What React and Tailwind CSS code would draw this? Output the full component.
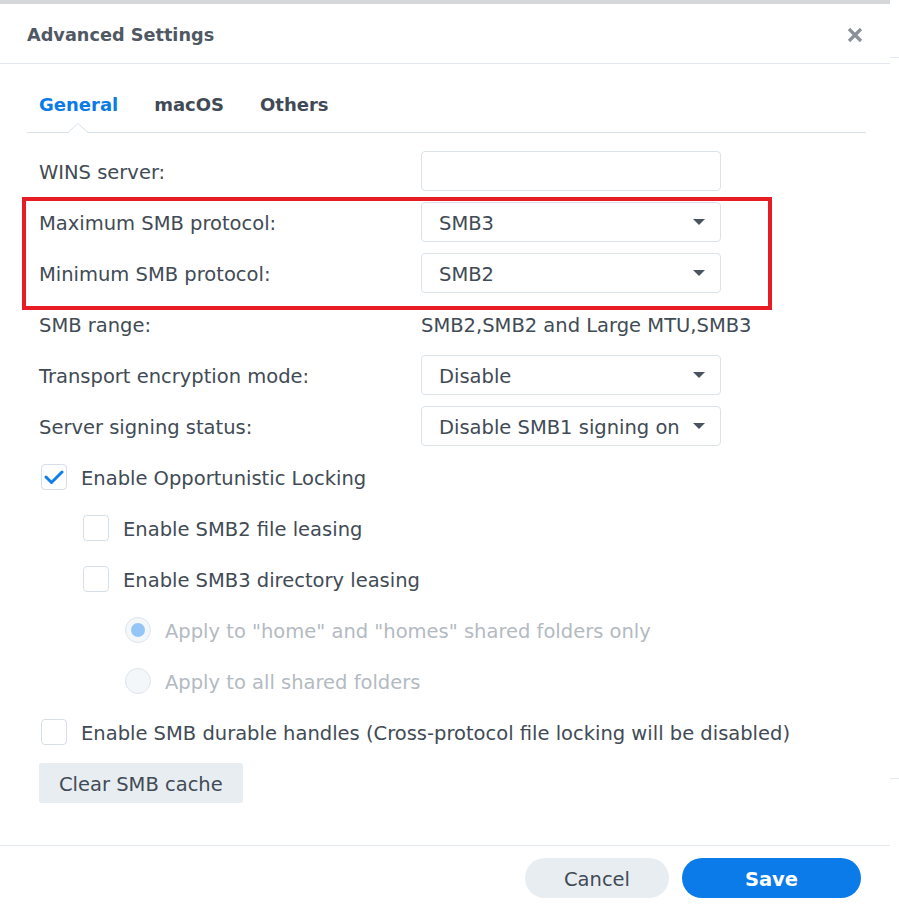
import React from "react";

function Select({ value }) {
  return (
    <div className="h-[40px] w-[300px] border border-[#dbe2ea] rounded-[4px] bg-white flex items-center justify-between pl-[17px] pr-[15px]">
      <span className="whitespace-nowrap pt-[3px]">{value}</span>
      <svg width="12" height="6" viewBox="0 0 12 6" className="shrink-0">
        <polygon points="0,0 12,0 6,6" fill="#4a5360" />
      </svg>
    </div>
  );
}

function Checkbox({ checked }) {
  return (
    <div className="w-[26px] h-[26px] rounded-[4px] border border-[#d6dee8] bg-white flex items-center justify-center shrink-0">
      {checked && (
        <svg width="20" height="16" viewBox="0 0 20 16">
          <polyline points="2,8 7.5,13.5 18,3" fill="none" stroke="#0f7fe8" strokeWidth="3" strokeLinecap="round" strokeLinejoin="round" />
        </svg>
      )}
    </div>
  );
}

function Radio({ checked }) {
  return (
    <div className="w-[26px] h-[26px] rounded-full border border-[#dde5ee] bg-[#f4f7fa] flex items-center justify-center shrink-0">
      {checked && <div className="w-[14px] h-[14px] rounded-full bg-[#93c6f6]" />}
    </div>
  );
}

function Row({ label, children }) {
  return (
    <div className="h-[40px] flex items-center">
      <div className="w-[382px] whitespace-nowrap pt-[3px]">{label}</div>
      {children}
    </div>
  );
}

export default function App() {
  return (
    <div className="w-[899px] h-[914px] bg-white overflow-hidden relative font-['DejaVu_Sans',sans-serif] text-[19.5px] text-[#414b55]">
      <div className="h-[4px] w-[890px] bg-[#d5d7d9]" />
      <div className="w-[890px] h-[910px] flex flex-col">
        {/* header */}
        <div className="h-[60px] shrink-0 flex items-center justify-between pl-[27px] pr-[27px] border-b border-[#e3e8ee]">
          <div className="text-[17.7px] font-bold text-[#4f5863] pt-[3px]">Advanced Settings</div>
          <svg width="16" height="16" viewBox="0 0 16 16" className="mt-[2px]">
            <line x1="2" y1="2" x2="14" y2="14" stroke="#8b9198" strokeWidth="3.2" />
            <line x1="14" y1="2" x2="2" y2="14" stroke="#8b9198" strokeWidth="3.2" />
          </svg>
        </div>

        {/* body */}
        <div className="flex-1 pl-[27px] pr-[24px]">
          {/* tabs */}
          <div className="relative border-b border-[#d8e2ec] pt-[29px] pb-[15px] pl-[12px] flex gap-[36px] text-[18px] font-bold leading-[24px]">
            <span className="text-[#0b7be6]">General</span>
            <span className="text-[#3f4a56]">macOS</span>
            <span className="text-[#3f4a56]">Others</span>
            <svg width="20" height="10" viewBox="0 0 20 10" className="absolute left-[41px] bottom-[-1px]">
              <polygon points="0,10 10,1 20,10" fill="#ffffff" />
              <polyline points="0,9.5 10,0.5 20,9.5" fill="none" stroke="#d8e2ec" strokeWidth="1" />
            </svg>
          </div>

          {/* form */}
          <div className="pt-[18px] pl-[12px] flex flex-col gap-[11px]">
            <Row label="WINS server:">
              <div className="h-[40px] w-[300px] border border-[#dbe2ea] rounded-[4px] bg-white" />
            </Row>
            <Row label="Maximum SMB protocol:">
              <Select value="SMB3" />
            </Row>
            <Row label="Minimum SMB protocol:">
              <Select value="SMB2" />
            </Row>
            <Row label="SMB range:">
              <span className="whitespace-nowrap pt-[3px]">SMB2,SMB2 and Large MTU,SMB3</span>
            </Row>
            <Row label="Transport encryption mode:">
              <Select value="Disable" />
            </Row>
            <Row label="Server signing status:">
              <Select value="Disable SMB1 signing on" />
            </Row>

            <div className="h-[40px] flex items-center gap-[14px] pl-[2px]">
              <Checkbox checked />
              <span className="whitespace-nowrap pt-[4px]">Enable Opportunistic Locking</span>
            </div>
            <div className="h-[40px] flex items-center gap-[14px] pl-[44px]">
              <Checkbox />
              <span className="whitespace-nowrap pt-[4px]">Enable SMB2 file leasing</span>
            </div>
            <div className="h-[40px] flex items-center gap-[14px] pl-[44px]">
              <Checkbox />
              <span className="whitespace-nowrap pt-[4px]">Enable SMB3 directory leasing</span>
            </div>
            <div className="h-[40px] flex items-center gap-[14px] pl-[86px] text-[#b3bac2]">
              <Radio checked />
              <span className="whitespace-nowrap pt-[4px]">Apply to "home" and "homes" shared folders only</span>
            </div>
            <div className="h-[40px] flex items-center gap-[14px] pl-[86px] text-[#b3bac2]">
              <Radio />
              <span className="whitespace-nowrap pt-[4px]">Apply to all shared folders</span>
            </div>
            <div className="h-[40px] flex items-center gap-[14px] pl-[2px]">
              <Checkbox />
              <span className="whitespace-nowrap pt-[4px]">Enable SMB durable handles (Cross-protocol file locking will be disabled)</span>
            </div>
            <div>
              <button className="h-[40px] px-[20px] rounded-[3px] bg-[#e8edf2] text-[#414b55] whitespace-nowrap pt-[3px]">Clear SMB cache</button>
            </div>
          </div>
        </div>

        {/* footer */}
        <div className="h-[69px] shrink-0 border-t border-[#e3e8ee] flex items-start justify-end pt-[12px] pr-[29px] gap-[13px]">
          <button className="h-[40px] w-[144px] rounded-full bg-[#e8edf2] text-[#414b55] pt-[3px]">Cancel</button>
          <button className="h-[40px] w-[179px] rounded-full bg-[#0a7be8] text-white font-semibold pt-[3px]">Save</button>
        </div>
      </div>

      {/* decorative right edge lines */}
      <div className="absolute left-[890px] top-[57px] w-[9px] h-[1px] bg-[#e3e8ee]" />
      <div className="absolute left-[890px] top-[778px] w-[9px] h-[1px] bg-[#e3e8ee]" />

      {/* red annotation box */}
      <div className="absolute left-[22px] top-[197px] w-[750px] h-[113px] border-[4px] border-[#e81c24]" />
    </div>
  );
}
